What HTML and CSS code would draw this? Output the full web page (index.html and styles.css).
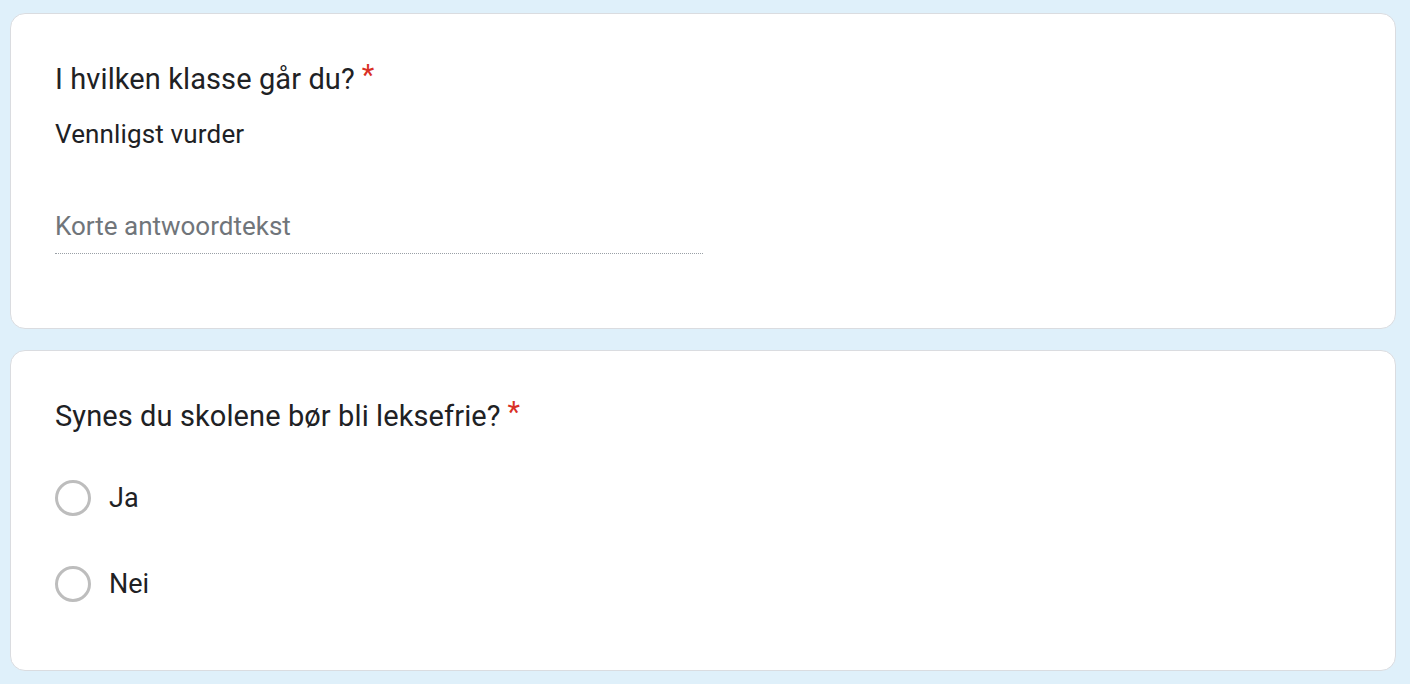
FILE: index.html
```html
<!DOCTYPE html>
<html lang="no">
  <head>
    <meta charset="UTF-8" />
    <meta name="viewport" content="width=device-width, initial-scale=1.0" />
    <title>Skjema</title>
    <link rel="stylesheet" href="styles.css">
  </head>
  <body>
    <div class="form">
      <div class="question-card">
        <div class="question-title">I hvilken klasse går du?<span class="required">*</span></div>
        <div class="question-desc">Vennligst vurder</div>
        <div class="short-answer">
          <input type="text" placeholder="Korte antwoordtekst" />
        </div>
      </div>
      <div class="question-card choice-card">
        <div class="question-title">Synes du skolene bør bli leksefrie?<span class="required">*</span></div>
        <div class="options">
          <label class="option">
            <span class="radio"></span>
            <span class="option-text">Ja</span>
          </label>
          <label class="option">
            <span class="radio"></span>
            <span class="option-text">Nei</span>
          </label>
        </div>
      </div>
    </div>
  </body>
</html>
```

FILE: styles.css
```css
html, body {
  margin: 0;
  height: 100%;
}
body {
  font-family: Roboto, "Liberation Sans", Arial, sans-serif;
  background-color: #dff0fa;
  color: #202124;
}
.form {
  padding: 13px 14px 0 10px;
  display: flex;
  flex-direction: column;
  gap: 21px;
}
.question-card {
  background-color: #fff;
  border: 1px solid #dadce0;
  border-radius: 15px;
  padding: 45px 44px 74px;
}
.question-title {
  font-size: 29px;
  line-height: 40px;
  letter-spacing: 0.1px;
}
.required {
  color: #d93025;
  padding-left: 7px;
  position: relative;
  top: -4px;
}
.question-desc {
  margin-top: 17px;
  font-size: 26px;
  line-height: 36px;
  letter-spacing: 0.15px;
}
.short-answer {
  margin-top: 56px;
  width: 648px;
  border-bottom: 1px dotted #9aa0a6;
}
.short-answer input {
  display: block;
  width: 100%;
  border: none;
  outline: none;
  padding: 0 0 9px;
  font-family: inherit;
  font-size: 26px;
  line-height: 36px;
  color: #202124;
  background: transparent;
}
.short-answer input::placeholder {
  color: #70757a;
}
.choice-card {
  padding-bottom: 68px;
}
.options {
  margin-top: 44px;
  display: flex;
  flex-direction: column;
  gap: 50px;
}
.option {
  display: flex;
  align-items: center;
  height: 36px;
}
.radio {
  width: 36px;
  height: 36px;
  box-sizing: border-box;
  border: 3px solid #bdbdbd;
  border-radius: 50%;
}
.option-text {
  margin-left: 18px;
  font-size: 27px;
}
```
